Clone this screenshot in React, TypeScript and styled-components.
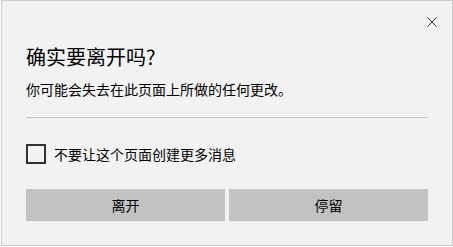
import styled, { createGlobalStyle } from "styled-components";

const GlobalStyle = createGlobalStyle`
  html, body {
    margin: 0;
    padding: 0;
    background: #ffffff;
  }
  body {
    font-family: "Noto Sans CJK SC", "Noto Sans", sans-serif;
    color: #000000;
  }
`;

const Dialog = styled.div`
  box-sizing: border-box;
  width: 452px;
  height: 246px;
  margin-left: 1px;
  padding: 0 24px 23px 24px;
  display: flex;
  flex-direction: column;
  background: #f2f2f2;
  border: 1px solid #cbcbcb;
`;

const TopBar = styled.div`
  display: flex;
  justify-content: flex-end;
  align-items: flex-start;
  height: 42px;
`;

const CloseButton = styled.button`
  width: 24px;
  height: 24px;
  margin: 9px -16px 0 0;
  padding: 0;
  border: none;
  background: transparent;
  display: flex;
  align-items: center;
  justify-content: center;
  cursor: pointer;
`;

const Title = styled.h1`
  margin: 0;
  font-size: 20px;
  line-height: 28px;
  font-weight: 400;
`;

const Message = styled.p`
  margin: 8px 0 0;
  font-size: 14px;
  line-height: 20px;
`;

const Separator = styled.hr`
  margin: 18px 0 0;
  height: 1px;
  border: none;
  background: #c6c6c6;
`;

const CheckRow = styled.label`
  display: flex;
  align-items: center;
  gap: 8px;
  margin-top: 26px;
  font-size: 14px;
  line-height: 20px;
  cursor: pointer;
`;

const Box = styled.span`
  box-sizing: border-box;
  width: 20px;
  height: 20px;
  border: 2px solid #333333;
  background: transparent;
`;

const Actions = styled.div`
  display: grid;
  grid-template-columns: 1fr 1fr;
  gap: 4px;
  margin-top: 25px;
`;

const ActionButton = styled.button`
  height: 32px;
  border: none;
  background: #c2c2c2;
  color: #000000;
  font-family: inherit;
  font-size: 14px;
  padding: 0;
  cursor: pointer;
`;

export default function App() {
  return (
    <>
      <GlobalStyle />
      <Dialog>
        <TopBar>
          <CloseButton aria-label="关闭">
            <svg width="10" height="10" viewBox="0 0 10 10">
              <path d="M0.5 0.5 L9.5 9.5 M9.5 0.5 L0.5 9.5" stroke="#333" strokeWidth="1" fill="none" />
            </svg>
          </CloseButton>
        </TopBar>
        <Title>确实要离开吗?</Title>
        <Message>你可能会失去在此页面上所做的任何更改。</Message>
        <Separator />
        <CheckRow>
          <Box />
          不要让这个页面创建更多消息
        </CheckRow>
        <Actions>
          <ActionButton>离开</ActionButton>
          <ActionButton>停留</ActionButton>
        </Actions>
      </Dialog>
    </>
  );
}
